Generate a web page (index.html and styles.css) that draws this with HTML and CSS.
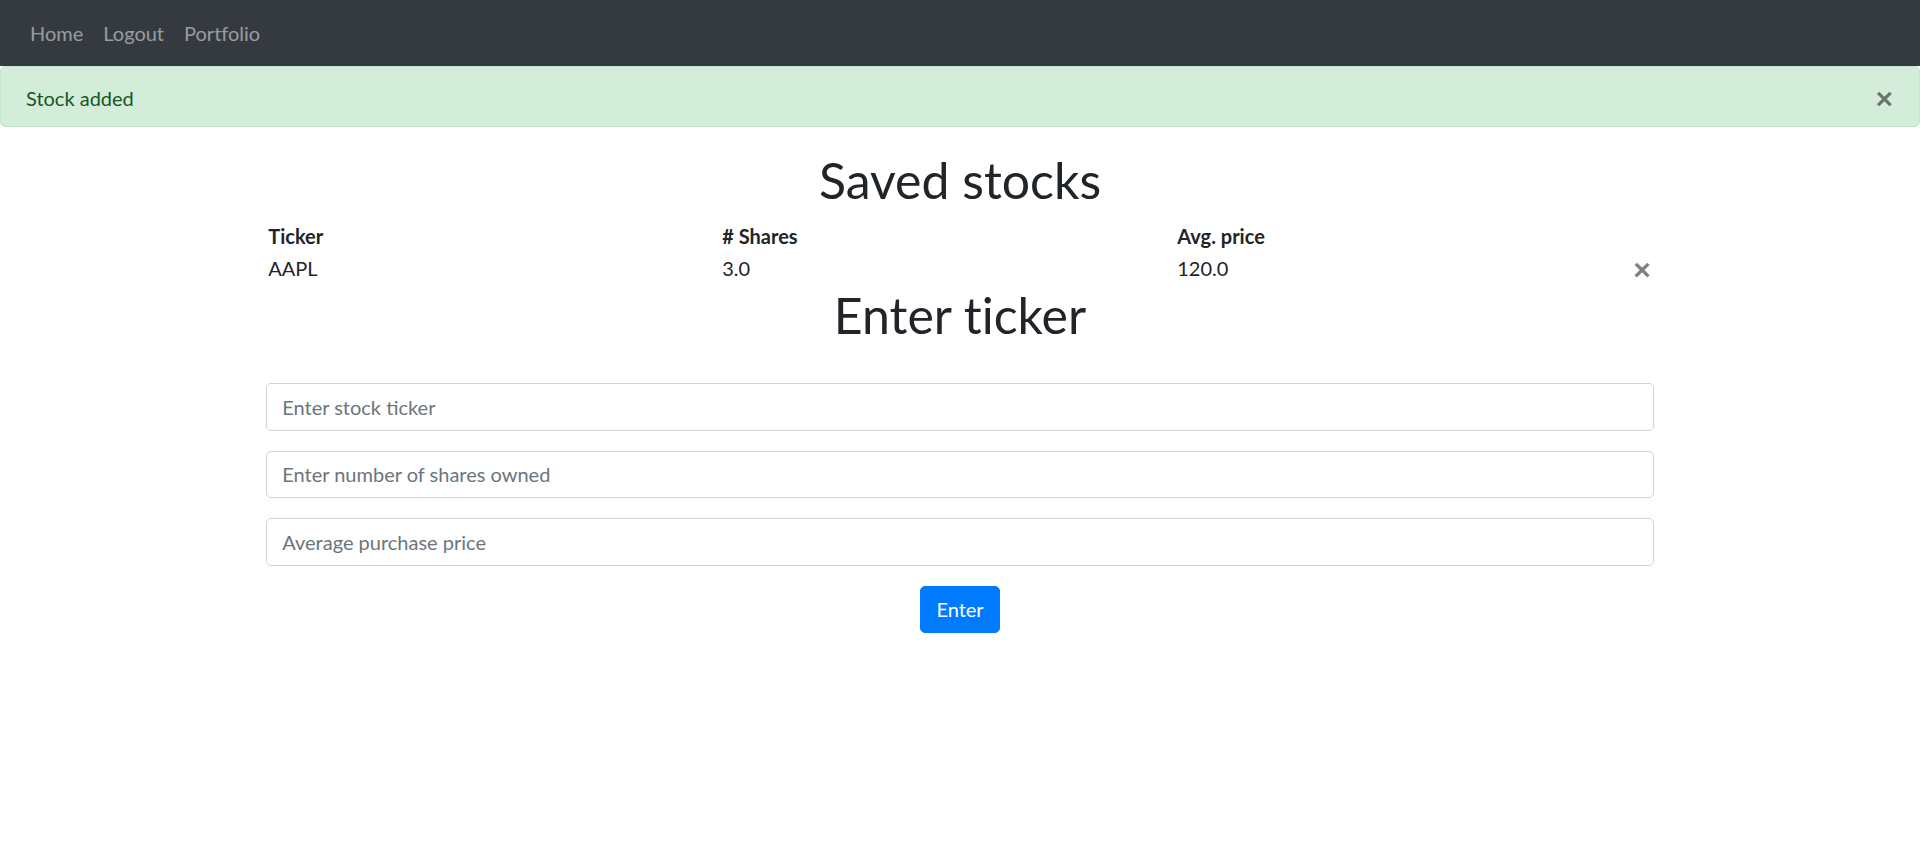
FILE: index.html
```html
<!DOCTYPE html>
<html lang="en">
<head>
<meta charset="utf-8">
<title>Portfolio</title>
<link rel="stylesheet" href="styles.css">
</head>
<body>
<nav class="navbar">
  <a class="nav-link" href="#">Home</a>
  <a class="nav-link" href="#">Logout</a>
  <a class="nav-link" href="#">Portfolio</a>
</nav>
<div class="alert">
  Stock added
  <button class="alert-close" type="button" aria-label="Close">&times;</button>
</div>
<main class="container">
  <h1 class="title">Saved stocks</h1>
  <div class="stocks">
    <div class="cell head">Ticker</div>
    <div class="cell head"># Shares</div>
    <div class="cell head">Avg. price</div>
    <div class="cell"></div>
    <div class="cell">AAPL</div>
    <div class="cell">3.0</div>
    <div class="cell">120.0</div>
    <div class="cell"><button class="row-delete" type="button" aria-label="Delete">&times;</button></div>
  </div>
  <h1 class="title">Enter ticker</h1>
  <form class="stock-form">
    <input class="form-control" type="text" placeholder="Enter stock ticker">
    <input class="form-control" type="text" placeholder="Enter number of shares owned">
    <input class="form-control" type="text" placeholder="Average purchase price">
    <button class="btn-primary" type="button">Enter</button>
  </form>
</main>
</body>
</html>
```

FILE: styles.css
```css
html, body {
  margin: 0;
  padding: 0;
}

body {
  font-family: Lato, "Noto Sans", sans-serif;
  font-size: 20px;
  line-height: 1.5;
  color: #212529;
  background: #fff;
  font-variant-ligatures: none;
}

.navbar {
  display: flex;
  align-items: center;
  height: 66px;
  box-sizing: border-box;
  padding: 0 20px;
  background: #343a40;
}

.nav-link {
  display: block;
  padding: 10px;
  line-height: 30px;
  color: rgba(255, 255, 255, 0.5);
  text-decoration: none;
}

.alert {
  position: relative;
  padding: 15.5px 100px 13.5px 25px;
  margin-bottom: 20px;
  color: #155724;
  background: #d4edda;
  border: 1px solid #c3e6cb;
  border-radius: 5px;
}

.alert-close {
  position: absolute;
  top: 0;
  right: 0;
  padding: 17px 26px 13px 25px;
  border: 0;
  background: transparent;
  font-family: "Liberation Sans", Arial, sans-serif;
  font-size: 30px;
  font-weight: 700;
  line-height: 1;
  color: #000;
  opacity: 0.5;
  text-shadow: 0 1px 0 #fff;
  cursor: pointer;
}

.container {
  width: 1387.5px;
  margin: 0 auto;
  padding-top: 2px;
}

.title {
  margin: 0 0 10px;
  padding-top: 1px;
  font-size: 50px;
  font-weight: 400;
  line-height: 60px;
  text-align: center;
}

.stocks {
  display: grid;
  grid-template-columns: 454px 455px 1fr auto;
  grid-auto-rows: 32px;
  align-items: center;
  padding: 0 2px;
}

.head {
  font-weight: 700;
}

.row-delete {
  display: block;
  margin: 4px 1px 0 0;
  padding: 0;
  border: 0;
  background: transparent;
  font-family: "Liberation Sans", Arial, sans-serif;
  font-size: 30px;
  font-weight: 700;
  line-height: 1;
  color: #000;
  opacity: 0.5;
  text-shadow: 0 1px 0 #fff;
  cursor: pointer;
}

.stock-form {
  margin-top: 38px;
  text-align: center;
}

.form-control {
  display: block;
  width: 100%;
  height: 47.5px;
  box-sizing: border-box;
  margin: 0 0 20px;
  padding: 7.5px 15px;
  font-family: inherit;
  font-size: 20px;
  line-height: 1.5;
  color: #495057;
  background: #fff;
  border: 1px solid #ced4da;
  border-radius: 5px;
}

.form-control::placeholder {
  color: #6c757d;
  opacity: 1;
}

.btn-primary {
  display: inline-block;
  padding: 7.5px 15px;
  font-family: inherit;
  font-size: 20px;
  line-height: 1.5;
  color: #fff;
  background: #007bff;
  border: 1px solid #007bff;
  border-radius: 5px;
  cursor: pointer;
}
```
